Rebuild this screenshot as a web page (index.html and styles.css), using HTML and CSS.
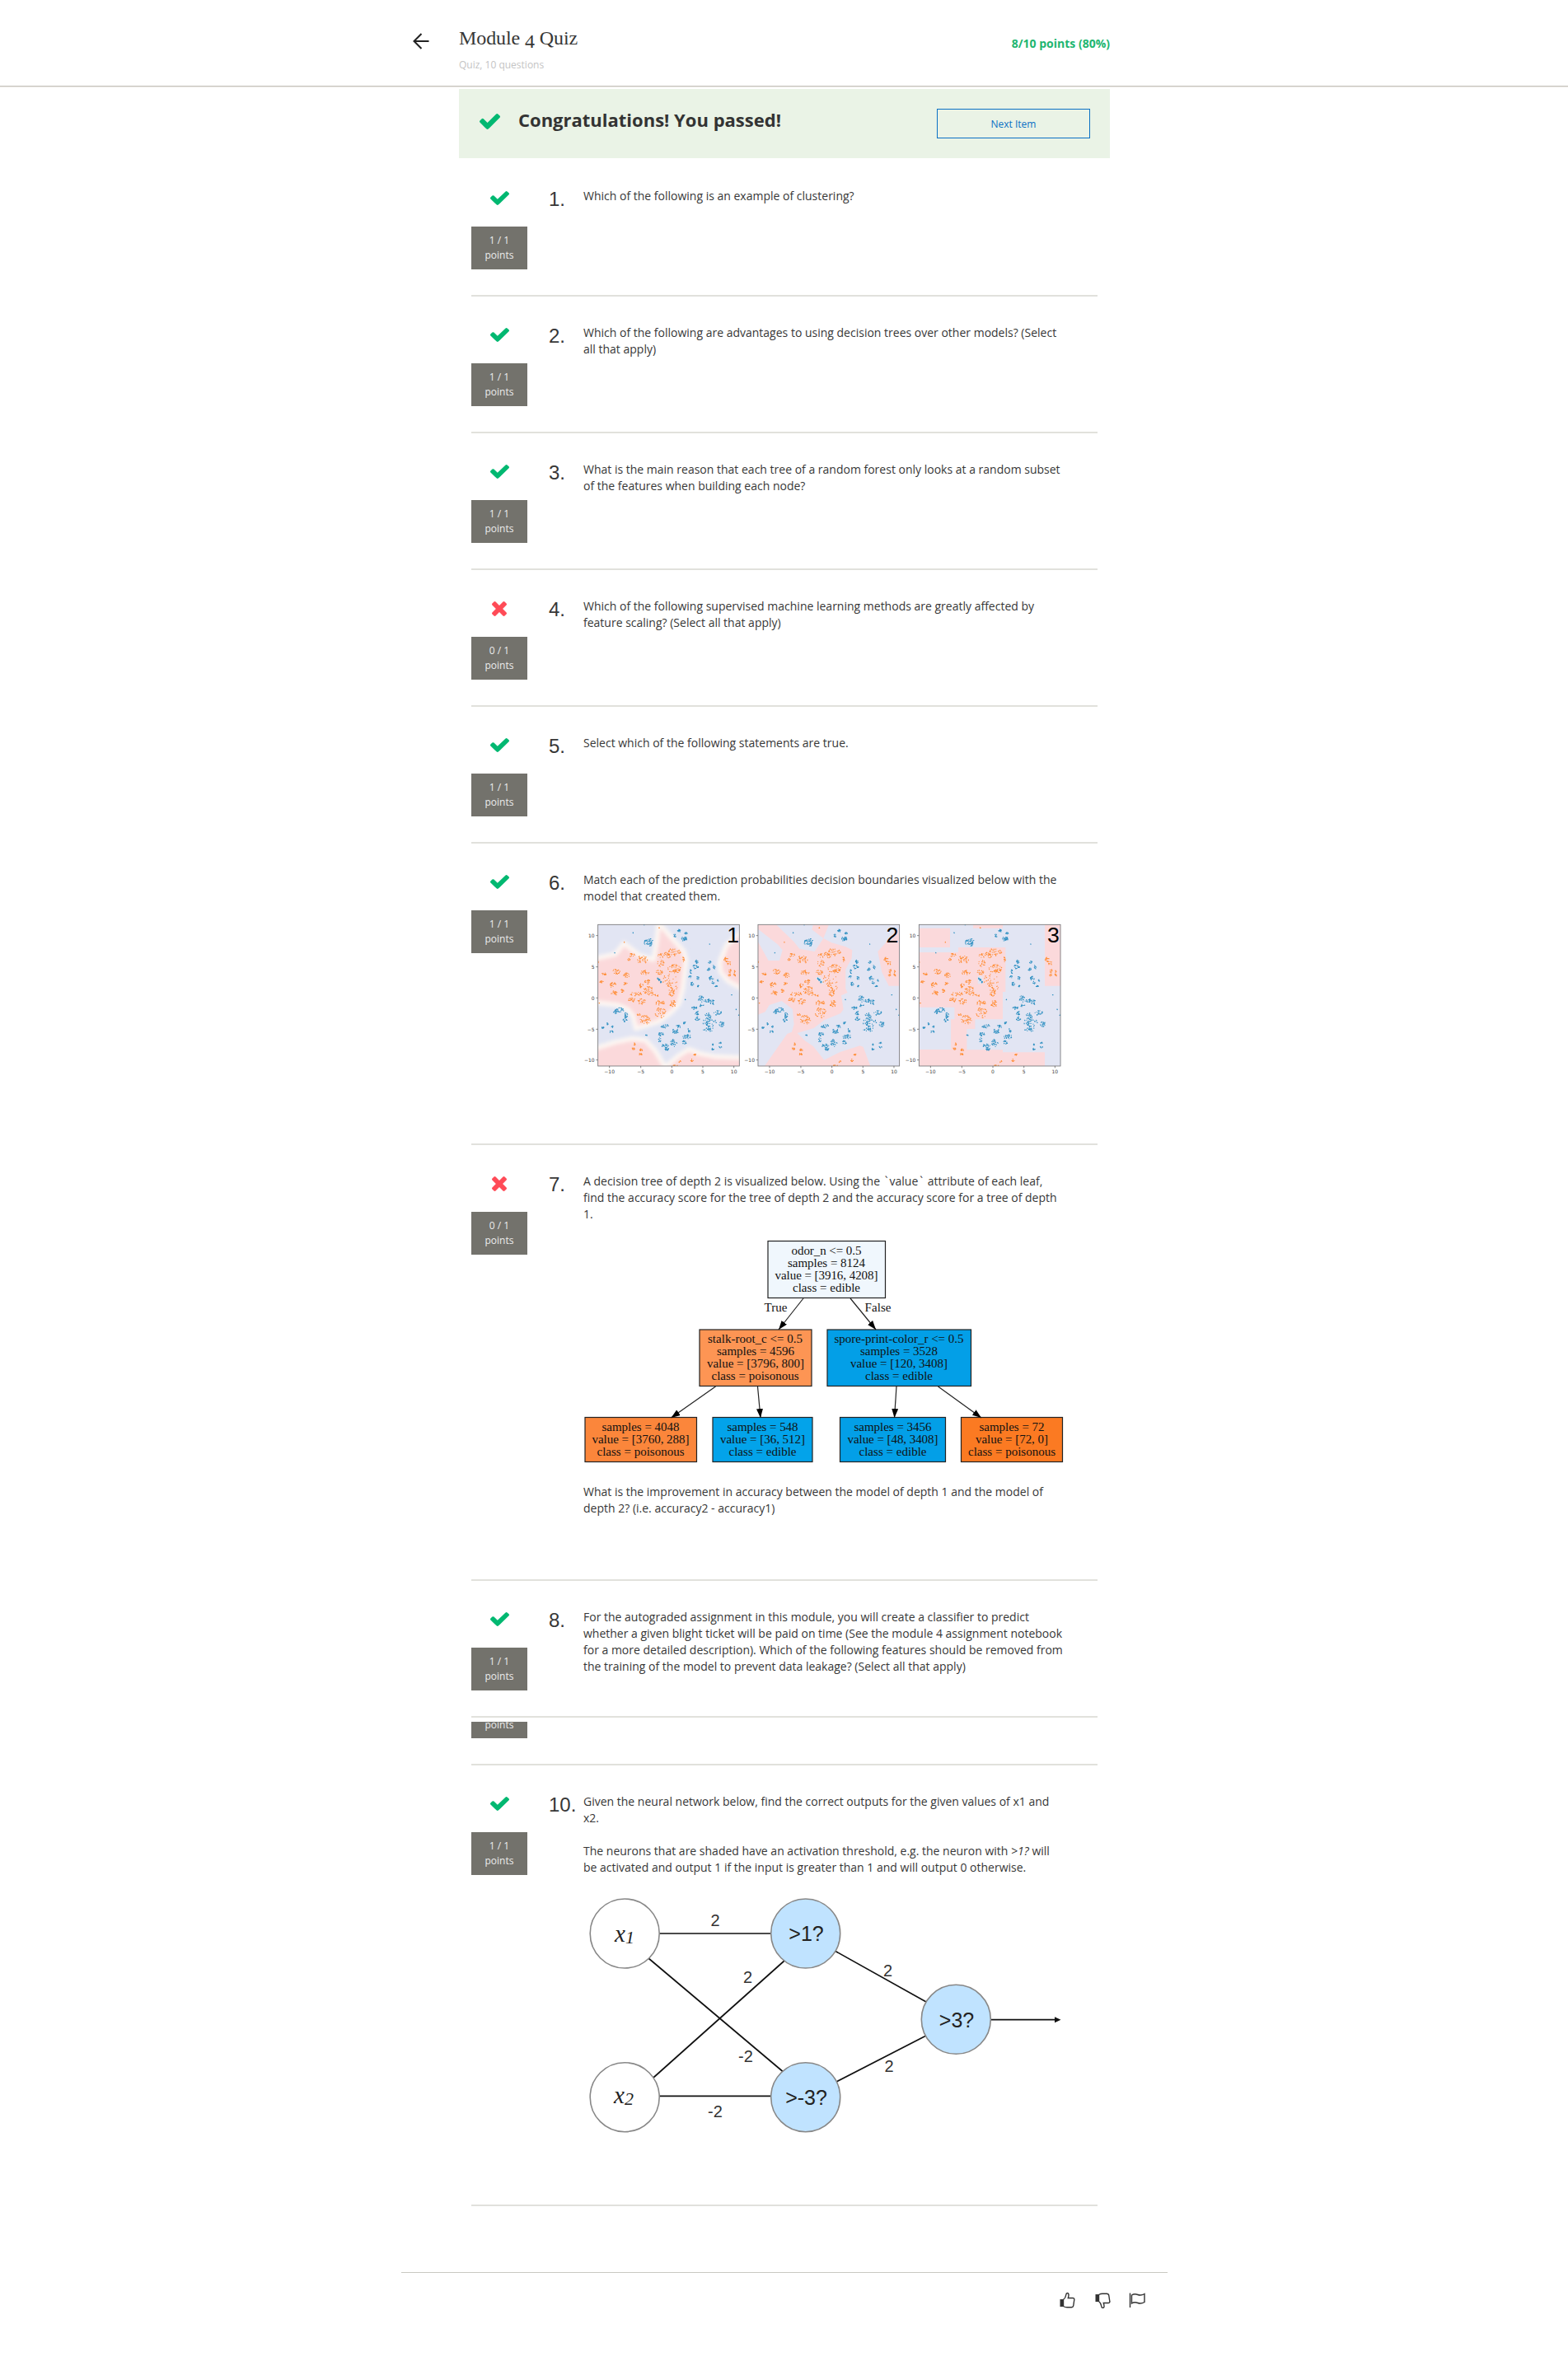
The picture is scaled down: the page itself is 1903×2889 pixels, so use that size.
FILE: index.html
```html
<!DOCTYPE html>
<html lang="en">
<head>
<meta charset="utf-8">
<title>Module 4 Quiz</title>
<link rel="stylesheet" href="styles.css">
</head>
<body>
<svg class="defs" width="0" height="0">
  <symbol id="check" viewBox="121 334 1550 1188" preserveAspectRatio="none"><path d="M1671 566q0 40-28 68l-724 724-136 136q-28 28-68 28t-68-28l-136-136-362-362q-28-28-28-68t28-68l136-136q28-28 68-28t68 28l294 295 656-657q28-28 68-28t68 28l136 136q28 28 28 68z"/></symbol>
  <symbol id="cross" viewBox="302 334 1188 1188"><path d="M1490 1322q0 40-28 68l-136 136q-28 28-68 28t-68-28l-294-294-294 294q-28 28-68 28t-68-28l-136-136q-28-28-28-68t28-68l294-294-294-294q-28-28-28-68t28-68l136-136q28-28 68-28t68 28l294 294 294-294q28-28 68-28t68 28l136 136q28 28 28 68t-28 68l-294 294 294 294q28 28 28 68z" transform="translate(0 -32)"/></symbol>
</svg>

<header class="top">
  <div class="top-inner">
    <svg class="back" viewBox="0 0 20 20"><path d="M19.5 10H2M10.5 1L1.5 10l9 9"/></svg>
    <div class="titles">
      <h1>Module <span class="oldstyle">4</span> Quiz</h1>
      <p>Quiz, 10 questions</p>
    </div>
    <strong class="score">8/10 points (80%)</strong>
  </div>
</header>

<main>
  <section class="banner">
    <svg class="banner-check"><use href="#check"/></svg>
    <h2>Congratulations! You passed!</h2>
    <button class="next">Next Item</button>
  </section>

  <section class="question">
    <div class="status"><svg class="ok"><use href="#check"/></svg><div class="badge">1 / 1<br>points</div></div>
    <div class="num">1.</div>
    <div class="body"><p>Which of the following is an example of clustering?</p></div>
  </section>

  <section class="question">
    <div class="status"><svg class="ok"><use href="#check"/></svg><div class="badge">1 / 1<br>points</div></div>
    <div class="num">2.</div>
    <div class="body"><p>Which of the following are advantages to using decision trees over other models? (Select<br>all that apply)</p></div>
  </section>

  <section class="question">
    <div class="status"><svg class="ok"><use href="#check"/></svg><div class="badge">1 / 1<br>points</div></div>
    <div class="num">3.</div>
    <div class="body"><p>What is the main reason that each tree of a random forest only looks at a random subset<br>of the features when building each node?</p></div>
  </section>

  <section class="question">
    <div class="status"><svg class="bad"><use href="#cross"/></svg><div class="badge">0 / 1<br>points</div></div>
    <div class="num">4.</div>
    <div class="body"><p>Which of the following supervised machine learning methods are greatly affected by<br>feature scaling? (Select all that apply)</p></div>
  </section>

  <section class="question">
    <div class="status"><svg class="ok"><use href="#check"/></svg><div class="badge">1 / 1<br>points</div></div>
    <div class="num">5.</div>
    <div class="body"><p>Select which of the following statements are true.</p></div>
  </section>

  <section class="question q6">
    <div class="status"><svg class="ok"><use href="#check"/></svg><div class="badge">1 / 1<br>points</div></div>
    <div class="num">6.</div>
    <div class="body">
      <p>Match each of the prediction probabilities decision boundaries visualized below with the<br>model that created them.</p>
      <svg class="plots" viewBox="708 1110 583 200">
        <defs>
          <clipPath id="frame"><rect x="77" y="67" width="515" height="515"/></clipPath>
          <filter id="halo" x="-20%" y="-20%" width="140%" height="140%"><feGaussianBlur stdDeviation="6"/></filter>
          <g id="dots"></g>
          <g id="axes">
            <rect x="77" y="67" width="515" height="515" fill="none" stroke="#77777a" stroke-width="2.6"/>
            <path d="M70 107h7M70 221h7M70 334h7M70 448h7M70 560h7M119 582v7M233 582v7M346 582v7M459 582v7M572 582v7" stroke="#666" stroke-width="2.4"/>
            <g class="ticks">
              <g text-anchor="end"><text x="65" y="114">10</text><text x="65" y="228">5</text><text x="65" y="341">0</text><text x="65" y="455">−5</text><text x="65" y="567">−10</text></g>
              <g text-anchor="middle"><text x="119" y="608">−10</text><text x="233" y="608">−5</text><text x="346" y="608">0</text><text x="459" y="608">5</text><text x="572" y="608">10</text></g>
            </g>
          </g>
        </defs>
        <g transform="translate(700 1100) scale(.33333)">
          <g clip-path="url(#frame)">
            <rect x="77" y="67" width="515" height="515" fill="#e2e5f3"/>
            <g filter="url(#halo)">
              <g id="soft" fill="#fbd9db" stroke="#fdf6f2" stroke-width="17" stroke-linejoin="round">
                <path d="M60 192L140 175 172 135 230 180 280 194 292 120 298 60 328 95 390 165 398 195 386 300 372 355 345 385 300 420 215 446 205 400 185 375 150 360 60 350z"/>
                <path d="M610 92L590 100 545 143 520 205 524 240 550 272 610 306z"/>
                <path d="M60 520L140 495 200 482 250 488 285 525 322 586 370 545 408 521 450 537 500 547 610 552V610H60z"/>
              </g>
            </g>
            <use href="#dots"/>
          </g>
          <use href="#axes"/>
          <text class="big" x="569" y="133">1</text>
        </g>
        <g transform="translate(894.3 1100) scale(.33333)">
          <g clip-path="url(#frame)">
            <rect x="77" y="67" width="515" height="515" fill="#fbd9db"/>
            <g fill="#e2e5f3">
              <path d="M77 83L150 140 166 160 155 198H115L77 130z"/>
              <path d="M143 67L208 130 228 155 283 165 315 117 273 85 278 67z"/>
              <path d="M335 67L315 117 345 133 395 147 420 160 418 190 396 230 396 300 403 315 380 325 388 375 378 390 318 415 280 444 220 462 248 490 278 510 318 560 378 530 448 508 460 512 486 582H595V290H553L528 240 513 165 563 110 595 75V67z"/>
              <path d="M77 395L103 385 118 360 163 345 203 375 208 430 200 458 183 465 101 582H77z"/>
              <path d="M285 262L303 256 318 276 313 285z"/>
            </g>
            <use href="#dots"/>
          </g>
          <use href="#axes"/>
          <text class="big" x="566" y="133">2</text>
        </g>
        <g transform="translate(1089.7 1100) scale(.33333)">
          <g clip-path="url(#frame)">
            <rect x="77" y="67" width="515" height="515" fill="#e2e5f3"/>
            <g fill="#fbd9db">
              <path d="M77 80h113v70H77zM274 67h108v13H274zM535 67h60v223h-60z"/>
              <path d="M77 168H220V150H392V312H382V412H281V447H251V523H382V532H535V582H77V522H193V412H206V368H77z"/>
            </g>
            <path d="M291 255h17v28h-17z" fill="#e2e5f3"/>
            <use href="#dots"/>
          </g>
          <use href="#axes"/>
          <text class="big" x="566" y="133">3</text>
        </g>
      </svg>
    </div>
  </section>

  <section class="question q7">
    <div class="status"><svg class="bad"><use href="#cross"/></svg><div class="badge">0 / 1<br>points</div></div>
    <div class="num">7.</div>
    <div class="body">
      <p>A decision tree of depth 2 is visualized below. Using the <span class="tick">`</span>value<span class="tick">`</span> attribute of each leaf,<br>find the accuracy score for the tree of depth 2 and the accuracy score for a tree of depth<br>1.</p>
      <svg class="tree" viewBox="708 1500 583 280">
        <defs><marker id="tip" viewBox="0 0 11 8" refX="11" refY="4" markerWidth="11" markerHeight="8" markerUnits="userSpaceOnUse" orient="auto"><path d="M0 0l11 4-11 4z"/></marker></defs>
        <g stroke="#222" stroke-width="1.2">
          <rect x="932" y="1506.5" width="142.5" height="69" fill="#f0f7fd"/>
          <rect x="849" y="1614" width="136" height="68.5" fill="#fd9554"/>
          <rect x="1004" y="1614" width="174.5" height="68.5" fill="#039fe7"/>
          <rect x="710" y="1720.5" width="135.5" height="54" fill="#fb863b"/>
          <rect x="865" y="1720.5" width="121" height="54" fill="#03a3ea"/>
          <rect x="1019.5" y="1720.5" width="128" height="54" fill="#039fe7"/>
          <rect x="1166.5" y="1720.5" width="123" height="54" fill="#fb7a22"/>
          <g marker-end="url(#tip)"><path d="M975 1576L945 1614"/><path d="M1032 1576L1063 1614"/><path d="M868.5 1683L814.5 1721"/><path d="M919.5 1683L923 1721"/><path d="M1088 1683L1085.5 1721"/><path d="M1138.5 1683L1191 1721"/></g>
        </g>
        <g class="tree-text">
          <text x="1003" y="1523" textLength="85">odor_n &lt;= 0.5</text><text x="1003" y="1538" textLength="94">samples = 8124</text><text x="1003" y="1553" textLength="125">value = [3916, 4208]</text><text x="1003" y="1568" textLength="82">class = edible</text>
          <text x="941.5" y="1591.5" textLength="28">True</text><text x="1065.5" y="1591.5" textLength="32">False</text>
          <text x="916.5" y="1630" textLength="115">stalk-root_c &lt;= 0.5</text><text x="917" y="1645" textLength="94">samples = 4596</text><text x="917" y="1660" textLength="118">value = [3796, 800]</text><text x="916.5" y="1675" textLength="106">class = poisonous</text>
          <text x="1091" y="1630" textLength="157">spore-print-color_r &lt;= 0.5</text><text x="1091" y="1645" textLength="94">samples = 3528</text><text x="1091" y="1660" textLength="118">value = [120, 3408]</text><text x="1091" y="1675" textLength="82">class = edible</text>
          <text x="777.5" y="1737" textLength="94">samples = 4048</text><text x="777.5" y="1752" textLength="118">value = [3760, 288]</text><text x="777.5" y="1767" textLength="106">class = poisonous</text>
          <text x="925.5" y="1737" textLength="86">samples = 548</text><text x="925.5" y="1752" textLength="103">value = [36, 512]</text><text x="925.5" y="1767" textLength="82">class = edible</text>
          <text x="1083.5" y="1737" textLength="94">samples = 3456</text><text x="1083.5" y="1752" textLength="110">value = [48, 3408]</text><text x="1083.5" y="1767" textLength="82">class = edible</text>
          <text x="1228" y="1737" textLength="79">samples = 72</text><text x="1228" y="1752" textLength="88">value = [72, 0]</text><text x="1228" y="1767" textLength="106">class = poisonous</text>
        </g>
      </svg>
      <p>What is the improvement in accuracy between the model of depth 1 and the model of<br>depth 2? (i.e. accuracy2 - accuracy1)</p>
    </div>
  </section>

  <section class="question">
    <div class="status"><svg class="ok"><use href="#check"/></svg><div class="badge">1 / 1<br>points</div></div>
    <div class="num">8.</div>
    <div class="body"><p>For the autograded assignment in this module, you will create a classifier to predict<br>whether a given blight ticket will be paid on time (See the module 4 assignment notebook<br>for a more detailed description). Which of the following features should be removed from<br>the training of the model to prevent data leakage? (Select all that apply)</p></div>
  </section>

  <section class="question cut">
    <div class="status"><div class="badge">points</div></div>
  </section>

  <section class="question q10">
    <div class="status"><svg class="ok"><use href="#check"/></svg><div class="badge">1 / 1<br>points</div></div>
    <div class="num">10.</div>
    <div class="body">
      <p>Given the neural network below, find the correct outputs for the given values of x1 and<br>x2.</p>
      <p class="second">The neurons that are shaded have an activation threshold, e.g. the neuron with <em>&gt;1?</em> will<br>be activated and output 1 if the input is greater than 1 and will output 0 otherwise.</p>
      <svg class="network" viewBox="708 2295 583 310">
        <g stroke="#111" stroke-width="1.7"><path d="M800 2347H936M787 2377L950 2514.5M793 2522L952 2380M800 2544.3H936M1014 2368.5L1124 2430M1015 2527L1123 2471.5M1202 2451.7H1282"/><path d="M1280 2448.2l7.5 3.5-7.5 3.5z" stroke="none" fill="#111"/></g>
        <g stroke="#888" stroke-width="1.6"><g fill="#fff"><circle cx="758.2" cy="2347" r="42"/><circle cx="758.2" cy="2545.7" r="42"/></g><g fill="#c0e3ff"><circle cx="977.7" cy="2347" r="42"/><circle cx="977.7" cy="2545.7" r="42"/><circle cx="1160.3" cy="2451.3" r="42"/></g></g>
        <g class="neuron"><text x="978.5" y="2356">&gt;1?</text><text x="978.5" y="2555">&gt;-3?</text><text x="1161" y="2460.5">&gt;3?</text></g>
        <g class="weight"><text x="868" y="2337.5">2</text><text x="907.5" y="2406.5">2</text><text x="1077.5" y="2398.5">2</text><text x="1079" y="2514.5">2</text><text x="905" y="2503">-2</text><text x="868" y="2569.5">-2</text></g>
        <g class="input"><text x="746" y="2357">x<tspan class="sub" dy="2">1</tspan></text><text x="745" y="2553">x<tspan class="sub" dy="2">2</tspan></text></g>
      </svg>
    </div>
  </section>
</main>

<footer>
  <svg viewBox="0 0 20 20"><path d="M5.5 9.5C7.5 8 8.5 6 8.8 3.5 9 .8 11.6.8 12 3.2c.1 1.500-.3 3-.7 4.300H17c1.500 0 2 .9 1.800 2l-1 7c-.3 1.700-1 2.300-2.500 2.300H10c-1.700 0-3-.4-4.500-1.300z"/><path class="solid" d="M1.500 9h4v9h-4z"/></svg>
  <svg viewBox="0 0 20 20"><g transform="matrix(1 0 0 -1 0 21)"><path d="M5.500 9.500C7.500 8 8.500 6 8.800 3.500 9 .8 11.600.8 12 3.200c.1 1.500-.3 3-.7 4.300H17c1.500 0 2 .9 1.800 2l-1 7c-.3 1.700-1 2.300-2.500 2.300H10c-1.700 0-3-.4-4.500-1.300z"/><path class="solid" d="M1.500 9h4v9h-4z"/></g></svg>
  <svg viewBox="0 0 20 20"><path d="M1.500 1.500V19M3.500 4c3-2 5-1.500 7.500-.5s4.500 1 8-1v10c-3.500 2-5.500 2-8 1s-4.500-1.500-7.500.5z"/></svg>
</footer>
<script src="dots.js"></script>
</body>
</html>
```

FILE: styles.css
```css
* { box-sizing: border-box; }
body { margin: 0; background: #fff; color: #373737; font: 14px/20px "Open Sans", sans-serif; }
h1, h2, p { margin: 0; font-weight: 400; }
.defs { display: block; height: 0; }

.top { height: 106px; border-bottom: 1px solid #e9e6e2; box-shadow: inset 0 -1px #c6c3bd; }
.top-inner { width: 846px; margin: 0 0 0 501px; display: flex; align-items: flex-start; }
.back { width: 20px; height: 20px; margin-top: 40px; flex: none; fill: none; stroke: #222; stroke-width: 2; }
.titles { margin: 31px auto 0 36px; }
.titles h1 { font: 24px/30px "Liberation Serif", serif; letter-spacing: -.1px; white-space: nowrap; }
.oldstyle { position: relative; top: 4px; }
.titles p { margin-top: 9px; font-size: 12px; line-height: 18px; color: #c4c4c4; }
.score { margin-top: 43px; font-size: 14px; color: #1db670; }

.banner { width: 790px; height: 84px; margin: 2px 0 0 557px; padding: 0 24px 0 25px; display: flex; align-items: flex-start; background: #eaf3e6; }
.banner-check { width: 25px; height: 19px; margin-top: 30px; fill: #01b871; flex: none; }
.banner h2 { margin: 22px auto 0 22px; font-size: 22px; line-height: 30px; font-weight: 700; color: #333; }
.next { width: 186px; height: 36px; margin-top: 24px; padding: 0; border: 1px solid #0a70c4; background: transparent; color: #0a70c4; font: 12px "Open Sans", sans-serif; }

.question { width: 760px; height: 166px; margin-left: 572px; border-bottom: 2px solid #e1e1dc; display: flex; align-items: flex-start; }
.banner + .question { height: 168px; padding-top: 2px; }
.status { width: 68px; flex: none; display: flex; flex-direction: column; align-items: center; padding-top: 38px; }
.ok { width: 23px; height: 17px; margin-bottom: 26px; fill: #01b871; }
.bad { width: 18px; height: 18px; margin-bottom: 25px; fill: #ff4b57; }
.badge { width: 68px; height: 52px; padding-top: 8px; background: #73726c; color: #ececec; font-size: 12px; line-height: 18px; text-align: center; }
.num { width: 68px; padding: 34px 0 0 26px; font: 24px/28px "Liberation Sans", sans-serif; flex: none; }
.body { width: 583px; padding-top: 34px; white-space: nowrap; }
.tick { padding: 0 2px; }
.body svg { display: block; width: 583px; }
.question.q6 { height: 366px; }
.plots { height: 200px; margin-top: 12px; }
.ticks text { font: 18px "DejaVu Sans", sans-serif; fill: #444; }
.big { font: 80px "Liberation Sans", sans-serif; fill: #000; text-anchor: middle; }
.question.q7 { height: 529px; }
.tree { height: 280px; margin-top: 16px; margin-bottom: 21px; }
.tree-text text { font: 15px "Liberation Serif", serif; fill: #111; text-anchor: middle; }
.question.cut { height: 58px; padding-top: 5px; }
.cut .status { padding: 0; height: 20px; overflow: hidden; }
.cut .badge { height: 20px; padding: 0; line-height: 7px; }
.question.q10 { height: 535px; }
.second { margin-top: 20px; }
.network { height: 310px; margin-top: 18px; }
.network text { text-anchor: middle; fill: #222; }
.neuron text { font: 25px "Liberation Sans", sans-serif; }
.weight text { font: 20px "Liberation Sans", sans-serif; fill: #333; }
.network .input text { font: italic 29px "Liberation Serif", serif; text-anchor: start; }
.network .sub { font-size: 22px; }

footer { width: 930px; height: 130px; margin: 80px 0 0 487px; padding: 23px 27px 0 0; border-top: 1px solid #c9c9c2; display: flex; justify-content: flex-end; gap: 22.500px; }
footer svg { width: 20px; height: 20px; fill: none; stroke: #333; stroke-width: 1.4; }
footer .solid { fill: #333; stroke: none; }
```

FILE: dots.js
```javascript
// Scatter clusters shared by the three plots: [cx, cy, rx, ry, count]
const orange = [
  [200,178,11,7,12],[190,195,6,5,6],[238,195,20,15,32],[143,238,14,10,20],[180,252,13,9,16],[100,247,10,4,12],[90,275,7,4,10],
  [131,287,12,10,18],[176,282,9,5,10],[166,308,6,7,9],[135,317,13,9,16],[248,242,16,9,20],[258,276,12,8,18],[235,290,9,9,12],
  [262,310,20,18,36],[215,320,22,9,20],[200,341,12,9,16],[237,347,16,10,20],[285,326,13,5,8],[226,395,8,4,8],[248,413,21,17,38],
  [303,352,18,10,24],[350,355,12,13,22],[305,387,20,20,34],[345,312,11,18,30],[350,280,22,28,20],[320,180,25,10,28],
  [350,168,28,14,34],[389,192,4,10,10],[305,208,13,12,18],[355,228,24,18,46],[300,241,14,8,16],[330,265,20,20,12],
  [544,195,8,9,16],[555,208,8,6,8],[558,236,4,7,8],[556,251,5,4,7],[575,251,4,6,7],[574,238,3,4,4],[210,503,3,5,7],
  [205,520,6,5,8],[235,523,6,5,8],[232,539,6,4,9],[430,541,5,3,6],[420,561,7,5,7],[375,567,5,5,7],[358,580,9,2,8],
  [300,79,1,1,3],[173,131,1,1,3],[78,203,1,2,3],[82,352,1,1,3]
];
const blue = [
  [372,89,6,5,12],[357,107,5,6,8],[398,100,5,5,8],[392,119,11,9,26],[262,132,17,15,46],[245,68,1,1,3],[205,97,1,1,3],
  [138,170,1,1,3],[484,138,1,1,3],[395,340,1,1,3],[564,323,1,1,3],[580,376,1,1,3],[590,397,1,1,3],[437,201,5,8,12],
  [432,220,12,8,18],[415,238,4,8,10],[412,257,5,4,7],[440,262,5,6,9],[420,283,6,6,12],[440,291,5,3,8],[484,203,5,5,9],
  [480,229,7,5,10],[500,222,5,8,10],[490,262,8,9,15],[498,278,6,5,7],[514,271,3,4,5],[507,291,5,3,9],[296,264,3,4,9],
  [301,270,3,4,9],[306,276,2,3,6],[450,335,12,9,18],[475,348,22,11,24],[496,350,5,11,10],[455,362,9,7,7],[428,370,10,6,18],
  [438,388,8,8,12],[440,410,9,7,14],[478,398,12,10,16],[513,388,14,10,18],[484,424,26,18,44],[480,448,20,8,20],[528,430,10,11,18],
  [155,377,17,9,24],[140,385,7,7,10],[176,397,10,10,18],[176,415,8,6,12],[112,428,3,5,7],[96,443,5,5,9],[130,439,5,3,6],
  [126,457,7,5,9],[253,470,3,2,6],[320,437,14,8,17],[306,467,10,8,18],[302,487,6,8,8],[358,455,14,8,20],[370,438,9,6,10],
  [393,425,6,4,11],[409,450,4,10,10],[400,475,16,8,22],[392,495,9,8,12],[353,497,12,14,24],[322,508,13,8,18],[328,521,9,4,14],
  [496,504,4,4,6],[495,520,5,4,8],[522,498,6,3,5],[522,513,6,3,6]
];
let seed = 7;
const rnd = () => (seed = (seed * 16807) % 2147483647) / 2147483647;
const scatter = (clusters, color) => {
  let d = "";
  for (const [cx, cy, rx, ry, n] of clusters) {
    for (let i = 0; i < n * 1.2; i++) {
      const a = rnd() * Math.PI * 2, r = Math.sqrt(rnd());
      d += `M${(cx + Math.cos(a) * rx * r).toFixed(1)} ${(cy + Math.sin(a) * ry * r).toFixed(1)}h.1`;
    }
  }
  const p = document.createElementNS("http://www.w3.org/2000/svg", "path");
  p.setAttribute("d", d);
  p.setAttribute("stroke", color);
  p.setAttribute("stroke-width", "3.6");
  p.setAttribute("stroke-linecap", "round");
  document.getElementById("dots").append(p);
};
scatter(orange, "#ff8c32");
scatter(blue, "#2d8fc1");
```
